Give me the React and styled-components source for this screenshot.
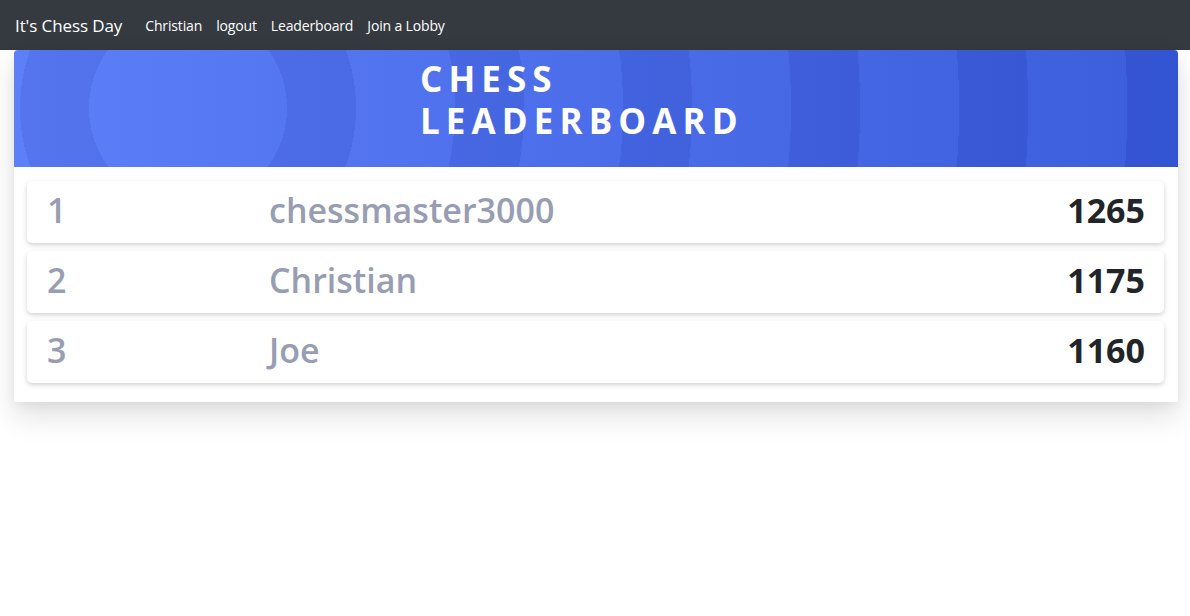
import React from "react";
import styled, { createGlobalStyle } from "styled-components";

const Global = createGlobalStyle`
  html, body { margin: 0; padding: 0; background: #fff; }
  body { font-family: "Open Sans", "Noto Sans", sans-serif; color: #212529; }
  * { box-sizing: border-box; }
`;

const Page = styled.div`
  min-height: 100vh;
  background: #fff;
`;

const Nav = styled.nav`
  height: 50px;
  background: #343a40;
  display: flex;
  align-items: center;
  padding: 0 15px;
`;

const Brand = styled.a`
  color: #fff;
  font-size: 17px;
  margin-right: 23px;
  text-decoration: none;
  letter-spacing: -0.1px;
`;

const NavLinks = styled.div`
  display: flex;
  gap: 14px;
`;

const NavLink = styled.a`
  color: #fff;
  font-size: 14px;
  text-decoration: none;
  letter-spacing: -0.15px;
`;

const Card = styled.section`
  margin: 0 12px 0 14px;
  background: #fff;
  border-radius: 4px 4px 0 0;
  box-shadow: 0 14px 30px rgba(0, 0, 0, 0.12), 0 4px 12px rgba(0, 0, 0, 0.05);
  padding-bottom: 19px;
`;

const Header = styled.header`
  height: 117px;
  border-radius: 4px 4px 0 0;
  background:
    repeating-radial-gradient(
      circle at 174px 58px,
      rgba(255, 255, 255, 0.03) 0px,
      rgba(255, 255, 255, 0.03) 99px,
      rgba(0, 0, 40, 0.05) 99px,
      rgba(0, 0, 40, 0.05) 168px
    ),
    linear-gradient(90deg, #587bf8 0%, #4a6cec 40%, #3658db 100%);
  display: flex;
  align-items: flex-start;
  padding: 8px 0 0 406px;
`;

const Title = styled.h1`
  margin: 0;
  color: #fff;
  font-size: 35px;
  font-weight: 700;
  letter-spacing: 6.1px;
  text-transform: uppercase;
`;

const TitleLine = styled.span`
  display: block;
  height: 42px;
  line-height: 42px;
`;

const List = styled.div`
  display: flex;
  flex-direction: column;
  gap: 8px;
  padding: 14px 14px 0 13px;
`;

const Row = styled.div`
  height: 62px;
  display: flex;
  align-items: center;
  padding: 0 19px 4px 20px;
  background: #fff;
  border-radius: 5px;
  box-shadow: 0 2px 5px rgba(0, 0, 0, 0.18);
  font-size: 34px;
`;

const Rank = styled.span`
  width: 222px;
  color: #979db2;
  font-weight: 600;
`;

const Name = styled.span`
  flex: 1;
  color: #979db2;
  font-weight: 600;
`;

const Score = styled.span`
  font-weight: 700;
  color: #212529;
`;

const players = [
  { name: "chessmaster3000", score: 1265 },
  { name: "Christian", score: 1175 },
  { name: "Joe", score: 1160 },
];

export default function App() {
  return (
    <Page>
      <Global />
      <Nav>
        <Brand href="#">It's Chess Day</Brand>
        <NavLinks>
          <NavLink href="#">Christian</NavLink>
          <NavLink href="#">logout</NavLink>
          <NavLink href="#">Leaderboard</NavLink>
          <NavLink href="#">Join a Lobby</NavLink>
        </NavLinks>
      </Nav>
      <Card>
        <Header>
          <Title>
            <TitleLine>Chess</TitleLine>
            <TitleLine>Leaderboard</TitleLine>
          </Title>
        </Header>
        <List>
          {players.map((p, i) => (
            <Row key={p.name}>
              <Rank>{i + 1}</Rank>
              <Name>{p.name}</Name>
              <Score>{p.score}</Score>
            </Row>
          ))}
        </List>
      </Card>
    </Page>
  );
}
